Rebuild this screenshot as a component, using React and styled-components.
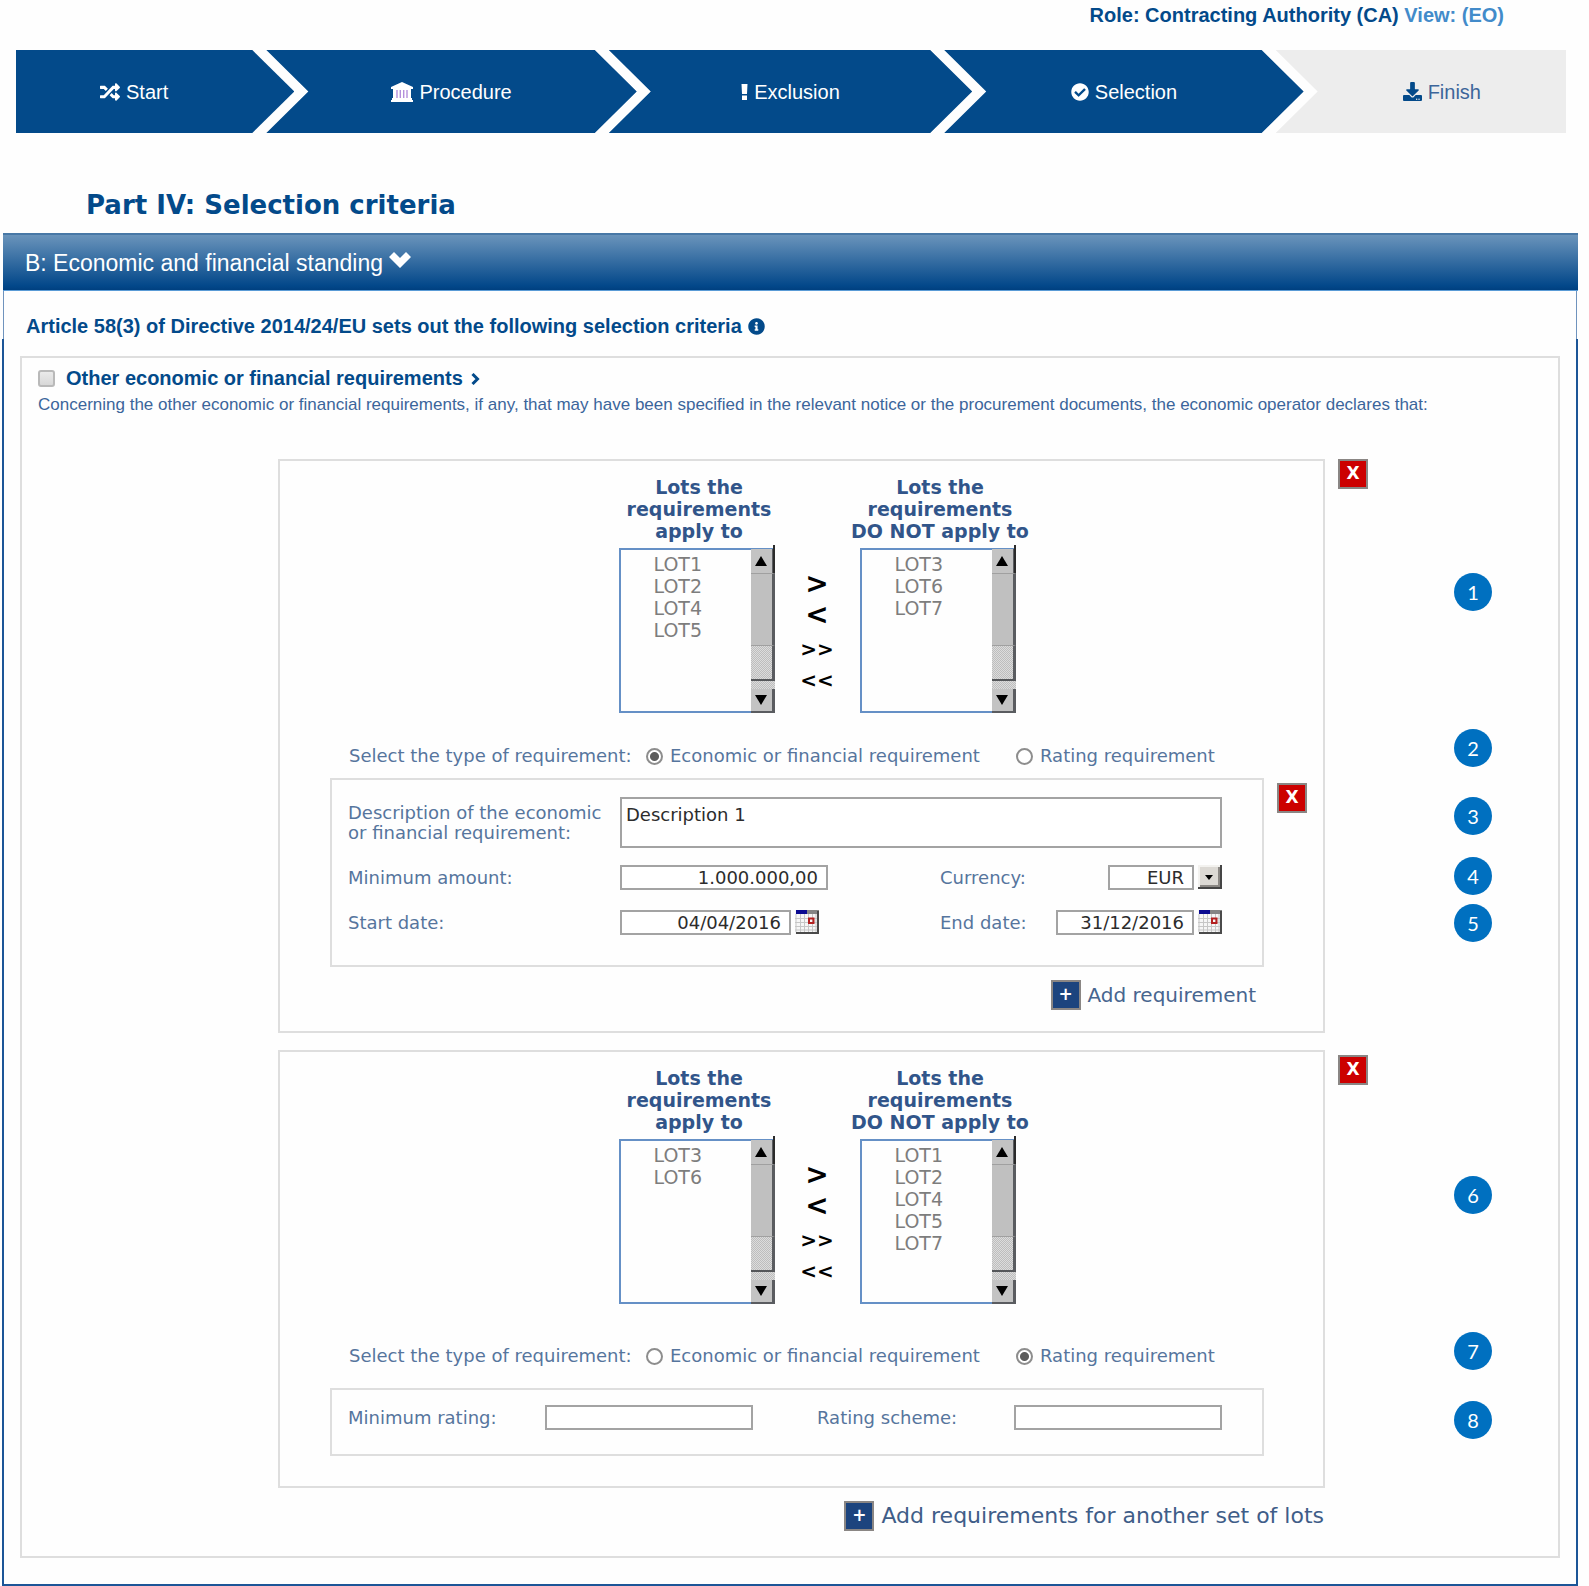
import React, { useState } from "react";
import styled, { createGlobalStyle, css } from "styled-components";
import { FaRandom, FaCheckCircle, FaDownload, FaInfoCircle } from "react-icons/fa";

const sans = `"Liberation Sans", Arial, sans-serif`;
const wide = `"DejaVu Sans", Verdana, sans-serif`;
const navy = "#034a8a";
const label = "#56759d";
const line = "#dedede";

const GlobalStyle = createGlobalStyle`
  * { box-sizing: border-box; }
  body { margin: 0; background: #fefefe; font-family: ${sans}; color: ${navy}; }
  button, input, select, textarea { font: inherit; color: inherit; margin: 0; }
`;

const Page = styled.main`
  padding: 0 11px 0 2px;
`;

const RoleLine = styled.div`
  height: 50px;
  padding: 4px 74px 0 0;
  text-align: right;
  font-size: 20px;
  line-height: 23px;
  font-weight: bold;
`;

const ViewLink = styled.a`
  color: #428bca;
  text-decoration: none;
`;

/* ---- wizard steps ---- */

const Steps = styled.nav`
  display: flex;
  height: 83px;
  margin: 0 12px 0 14px;
`;

const shapes = {
  first: css`
    clip-path: polygon(0 0, calc(100% - 42px) 0, 100% 50%, calc(100% - 42px) 100%, 0 100%);
    padding-right: 42px;
  `,
  middle: css`
    clip-path: polygon(0 0, calc(100% - 42px) 0, 100% 50%, calc(100% - 42px) 100%, 0 100%, 42px 50%);
  `,
  last: css`
    clip-path: polygon(0 0, 100% 0, 100% 100%, 0 100%, 42px 50%);
    padding-left: 42px;
  `,
};

const Step = styled.a`
  display: flex;
  align-items: center;
  justify-content: center;
  gap: 6px;
  flex: ${(p) => `${p.$share} ${p.$share} ${p.$share}px`};
  font-size: 20px;
  line-height: 24px;
  text-decoration: none;
  color: ${(p) => (p.$idle ? "#3c659a" : "#fff")};
  background: ${(p) => (p.$idle ? "#ededed" : navy)};
  & + & { margin-left: -28px; }
  svg { color: ${(p) => (p.$idle ? navy : "#fff")}; flex: none; }
  ${(p) => shapes[p.$shape]}
`;

/* ---- panel ---- */

const Title = styled.h1`
  margin: 57px 0 13px 84px;
  font: bold 26px/30px ${wide};
`;

const PanelHeader = styled.h2`
  display: flex;
  align-items: center;
  gap: 6px;
  height: 58px;
  margin: 0 0 0 1px;
  padding: 0 22px;
  border-top: 2px solid #4878a6;
  border-bottom: 1px solid #5a9bd6;
  background: linear-gradient(#6a94bb, #03488a 92%, #004080);
  color: #fff;
  font-size: 23px;
  line-height: 28px;
  font-weight: normal;
  svg { margin-bottom: 6px; }
`;

const PanelIntro = styled.div`
  display: flex;
  align-items: center;
  gap: 6px;
  height: 48px;
  margin: 0 1px;
  padding: 22px 22px 0;
  border: solid #6f93bd;
  border-width: 0 1px;
  font-size: 20px;
  line-height: 23px;
  font-weight: bold;
`;

const PanelBody = styled.section`
  padding: 17px 16px 26px;
  border: 2px solid #1c5597;
  border-top: 0;
`;

const Box = styled.div`
  border: 2px solid ${line};
  padding-bottom: 25px;
`;

const CriterionLabel = styled.label`
  display: flex;
  align-items: center;
  margin: 9px 16px 0;
  font-size: 20px;
  line-height: 23px;
  font-weight: bold;
  svg { margin-left: 8px; }
`;

const Checkbox = styled.input`
  appearance: none;
  width: 17px;
  height: 17px;
  margin-right: 11px;
  border: 2px solid #b9b9b9;
  border-radius: 3px;
  background: linear-gradient(#eaeaea, #d8d8d8);
  &:checked { background: ${navy}; }
`;

const Note = styled.p`
  margin: 5px 16px 44px;
  color: #3b659b;
  font-size: 17px;
  line-height: 20px;
`;

/* ---- requirement sets ---- */

const SetRow = styled.div`
  display: flex;
  align-items: flex-start;
  margin: 0 66px 17px 256px;
`;

const Card = styled.section`
  flex: 1;
  min-width: 0;
  border: 2px solid ${line};
  padding: 15px 0 ${(p) => p.$bottom}px;
`;

const SquareButton = styled.button`
  flex: none;
  width: 30px;
  height: 30px;
  padding: 0 0 2px;
  border: 2px solid #8a8684;
  background: ${(p) => (p.$danger ? "#cc0000" : "#1c447e")};
  color: #fff;
  font: bold 17px/22px ${wide};
  text-align: center;
`;

const DeleteSlot = styled.div`
  display: flex;
  padding: ${(p) => (p.$low ? 5 : 0)}px 0 0 13px;
`;

const Markers = styled.div`
  display: flex;
  flex-direction: column;
  margin-left: 86px;
`;

const Marker = styled.span`
  display: flex;
  align-items: center;
  justify-content: center;
  width: 38px;
  height: 38px;
  margin-top: ${(p) => p.$space}px;
  border-radius: 50%;
  background: #0070c0;
  color: #fff;
  font: 20px/24px Lato, sans-serif;
`;

/* ---- lot picker ---- */

const Picker = styled.div`
  display: flex;
  justify-content: center;
  padding-left: 31px;
`;

const LotColumn = styled.div`
  display: flex;
  flex-direction: column;
  align-items: center;
  width: 196px;
`;

const LotTitle = styled.label`
  padding-left: 5px;
  margin-bottom: 6px;
  text-align: center;
  white-space: pre-line;
  color: #31558a;
  font: bold 19px/22px ${wide};
`;

const ListFrame = styled.div`
  display: flex;
  width: 156px;
  height: 165px;
  border: 2px solid #6590c6;
  border-right: 0;
`;

const LotList = styled.select`
  appearance: none;
  flex: 1;
  min-width: 0;
  padding: 3px 0 0;
  border: 0;
  border-radius: 0;
  outline: 0;
  overflow: hidden;
  background: transparent;
  color: #7d7d7d;
  font: 19px/22px ${wide};
  option { height: 22px; min-height: 22px; padding: 0 0 0 33px; color: #7d7d7d; }
`;

const ScrollBar = styled.div`
  position: relative;
  display: flex;
  flex-direction: column;
  width: 24px;
  margin: -1px 0 -2px;
  background: repeating-conic-gradient(#bdbdbd 0 25%, #dcdcdc 0 50%) 0 0 / 2px 2px;
  &::after {
    content: "";
    position: absolute;
    right: 0;
    top: -4px;
    width: 2px;
    height: 28px;
    background: #2b2b2b;
  }
`;

const ScrollButton = styled.button`
  display: flex;
  align-items: center;
  justify-content: center;
  height: 24px;
  padding: 0;
  border: solid #5a5c60;
  border-width: 0 3px ${(p) => (p.$down ? 2 : 0)}px 0;
  background: #c3c3c3;
`;

const Thumb = styled.div`
  height: 73px;
  border: solid #a0a0a0;
  border-width: 1px 0;
  border-right: 3px solid #5a5c60;
  background: #c0c0c0;
`;

const Track = styled.div`
  flex: 1;
  margin-bottom: 8px;
  border-right: 3px solid #5a5c60;
  border-bottom: 2px solid #55575a;
`;

const MoveColumn = styled.div`
  display: flex;
  flex-direction: column;
  justify-content: flex-end;
  width: 45px;
  padding-bottom: 18px;
`;

const MoveButton = styled.button`
  height: 31px;
  padding: 0 0 ${(p) => (p.$all ? 0 : 5)}px;
  border: 0;
  background: none;
  color: #000;
  font: bold ${(p) => (p.$all ? 20 : 28)}px/26px ${wide};
  white-space: nowrap;
`;

/* ---- requirement form ---- */

const TypeRow = styled.fieldset`
  display: flex;
  align-items: center;
  height: 24px;
  margin: ${(p) => (p.$roomy ? "40px 0 20px 69px" : "31px 0 10px 69px")};
  padding: 0;
  border: 0;
  color: ${label};
  font: 18px/24px ${wide};
`;

const TypePrompt = styled.span`
  width: 297px;
`;

const TypeOption = styled.label`
  display: flex;
  align-items: center;
  gap: 7px;
  width: ${(p) => p.$width};
`;

const Radio = styled.input`
  appearance: none;
  width: 17px;
  height: 17px;
  border: 2px solid #8d8d8d;
  border-radius: 50%;
  background: #fff;
  &:checked { background: radial-gradient(circle, #5c5c5c 0 4px, #fff 5px); }
`;

const DetailRow = styled.div`
  display: flex;
  align-items: flex-start;
  padding: 0 ${(p) => (p.$removable ? 16 : 59)}px 0 50px;
`;

const detailLayouts = {
  economic: css`
    grid-template-columns: 272px 1fr 282px;
    gap: 17px 0;
    padding: 17px 40px 27px 16px;
  `,
  rating: css`
    grid-template-columns: 197px 208px 1fr 197px 208px;
    padding: 15px 40px 24px 16px;
  `,
};

const Details = styled.div`
  display: grid;
  flex: 1;
  border: 2px solid ${line};
  color: ${label};
  font: 18px/25px ${wide};
  ${(p) => detailLayouts[p.$kind]}
`;

const LongLabel = styled.label`
  align-self: center;
  line-height: 20px;
`;

const Field = styled.input`
  width: ${(p) => p.$width}px;
  height: 25px;
  padding: 0 8px;
  border: 2px solid #a3a3a3;
  background: #fff;
  color: #2c2c2c;
  text-align: right;
`;

const TextArea = styled.textarea`
  display: block;
  grid-column: span 2;
  height: 51px;
  padding: 5px 4px;
  border: 2px solid #a3a3a3;
  background: #fff;
  color: #2c2c2c;
  line-height: 22px;
  resize: none;
`;

const Control = styled.div`
  display: flex;
  gap: 4px;
  height: 28px;
`;

const LabelledControl = styled(Control)`
  label { flex: 1; }
`;

const Currency = styled.select`
  appearance: none;
  width: 86px;
  height: 25px;
  padding: 0 8px;
  border: 2px solid #a3a3a3;
  border-radius: 0;
  background: #fff;
  color: #2c2c2c;
  line-height: 21px;
  text-align-last: right;
`;

const IconButton = styled.button`
  display: block;
  width: 24px;
  height: 24px;
  padding: 0;
  border: 0;
  background: none;
  svg { display: block; }
`;

const AddRow = styled.div`
  display: flex;
  align-items: center;
  justify-content: flex-end;
  gap: 7px;
  margin: 13px 67px 0 0;
  color: #47658f;
  font: 20px/30px ${wide};
`;

const AddSetRow = styled(AddRow)`
  margin: -4px 234px 0 0;
  color: #3f5d88;
  font-size: 22px;
`;

/* ---- drawings ---- */

const Bank = () => (
  <svg width="22" height="20" viewBox="0 0 22 20">
    <path fill="#fff" d="M11 0 22 5v2H0V5zM2 7h18v9H2zM1 16h20v2H1zM0 18h22v2H0z" />
    <path stroke="#b48fdc" strokeWidth="1.4" d="M6 8v8M9.3 8v8M12.7 8v8M16 8v8" />
  </svg>
);

const Exclamation = () => (
  <svg width="7" height="16" viewBox="0 0 7 16">
    <path fill="#fff" d="M.5 0h6L6 10H1zM1 11.500h5V16H1z" />
  </svg>
);

const ChevronDown = () => (
  <svg width="22" height="16" viewBox="0 0 22 16">
    <path fill="#fff" d="M0 5 5 0l6 6 6-6 5 5-11 11z" />
  </svg>
);

const ChevronRight = () => (
  <svg width="9" height="12" viewBox="0 0 9 12">
    <path fill="none" stroke={navy} strokeWidth="3" d="M1.5 1 6.5 6l-5 5" />
  </svg>
);

const Triangle = ({ down }) => (
  <svg width="12" height="10" viewBox="0 0 12 10">
    <path d={down ? "M0 0h12L6 10z" : "M0 10h12L6 0z"} />
  </svg>
);

const Calendar = () => (
  <svg width="24" height="24" viewBox="0 0 24 24">
    <path fill="#f6f6f6" d="M0 0h24v24H0z" />
    <path stroke="#c6c6c6" strokeWidth="1" d="M1 4v18M5.500 4v18M9.500 4v18M13.500 4v18M17.500 4v18M21 4v18M0 8.500h22M0 12.500h22M0 16.500h22M0 20h22" />
    <path fill="#0a0a90" d="M1 0h11v4H1z" />
    <path fill="#858585" d="M12 0h12v4H12z" />
    <path fill="none" stroke="#b32020" strokeWidth="2" d="M14 8.500h4.500v4.500H14z" />
    <path fill="none" stroke="#4a4a4a" strokeWidth="2" d="M23 1v22H1" />
  </svg>
);

const DropArrow = () => (
  <svg width="24" height="24" viewBox="0 0 24 24">
    <path fill="#dcd9d4" d="M0 0h24v24H0z" />
    <path fill="none" stroke="#f3f2ef" strokeWidth="2" d="M1 22V1h21" />
    <path fill="none" stroke="#8b8884" strokeWidth="2" d="M21 2v19H2" />
    <path fill="none" stroke="#454545" strokeWidth="2" d="M23 0v23H0" />
    <path d="M7 10h8l-4 5z" />
  </svg>
);

/* ---- composition ---- */

function LotBox({ id, title, lots }) {
  return (
    <LotColumn>
      <LotTitle htmlFor={id}>{title}</LotTitle>
      <ListFrame>
        <LotList id={id} multiple>
          {lots.map((n) => (
            <option key={n}>{`LOT${n}`}</option>
          ))}
        </LotList>
        <ScrollBar>
          <ScrollButton type="button" aria-label="Scroll up"><Triangle /></ScrollButton>
          <Thumb />
          <Track />
          <ScrollButton type="button" $down aria-label="Scroll down"><Triangle down /></ScrollButton>
        </ScrollBar>
      </ListFrame>
    </LotColumn>
  );
}

function LotPicker({ id, applied, excluded }) {
  return (
    <Picker>
      <LotBox id={`${id}-in`} title={"Lots the\nrequirements\napply to"} lots={applied} />
      <MoveColumn>
        <MoveButton type="button">&gt;</MoveButton>
        <MoveButton type="button">&lt;</MoveButton>
        <MoveButton type="button" $all>&gt;&gt;</MoveButton>
        <MoveButton type="button" $all>&lt;&lt;</MoveButton>
      </MoveColumn>
      <LotBox id={`${id}-out`} title={"Lots the\nrequirements\nDO NOT apply to"} lots={excluded} />
    </Picker>
  );
}

function TypeChoice({ id, initial, roomy }) {
  const [kind, setKind] = useState(initial);
  return (
    <TypeRow $roomy={roomy}>
      <TypePrompt>Select the type of requirement:</TypePrompt>
      <TypeOption $width="370px">
        <Radio type="radio" name={id} checked={kind === "economic"} onChange={() => setKind("economic")} />
        Economic or financial requirement
      </TypeOption>
      <TypeOption $width="auto">
        <Radio type="radio" name={id} checked={kind === "rating"} onChange={() => setKind("rating")} />
        Rating requirement
      </TypeOption>
    </TypeRow>
  );
}

function MarkerRail({ items }) {
  return (
    <Markers>
      {items.map(([n, space]) => (
        <Marker key={n} $space={space}>{n}</Marker>
      ))}
    </Markers>
  );
}

export default function App() {
  return (
    <>
      <GlobalStyle />
      <Page>
        <RoleLine>
          Role: Contracting Authority (CA) <ViewLink href="#eo">View: (EO)</ViewLink>
        </RoleLine>
        <Steps>
          <Step href="#start" $share={278} $shape="first"><FaRandom size={20} />Start</Step>
          <Step href="#procedure" $share={370} $shape="middle"><Bank />Procedure</Step>
          <Step href="#exclusion" $share={363} $shape="middle"><Exclamation />Exclusion</Step>
          <Step href="#selection" $share={359} $shape="middle"><FaCheckCircle size={18} />Selection</Step>
          <Step href="#finish" $share={290} $shape="last" $idle><FaDownload size={19} />Finish</Step>
        </Steps>

        <Title>Part IV: Selection criteria</Title>
        <PanelHeader>B: Economic and financial standing <ChevronDown /></PanelHeader>
        <PanelIntro>
          Article 58(3) of Directive 2014/24/EU sets out the following selection criteria
          <FaInfoCircle size={17} />
        </PanelIntro>
        <PanelBody>
          <Box>
            <CriterionLabel>
              <Checkbox type="checkbox" />
              Other economic or financial requirements
              <ChevronRight />
            </CriterionLabel>
            <Note>
              Concerning the other economic or financial requirements, if any, that may have been specified in the
              relevant notice or the procurement documents, the economic operator declares that:
            </Note>

            <SetRow>
              <Card $bottom={21}>
                <LotPicker id="set1" applied={[1, 2, 4, 5]} excluded={[3, 6, 7]} />
                <TypeChoice id="type1" initial="economic" />
                <DetailRow $removable>
                  <Details $kind="economic">
                    <LongLabel htmlFor="desc">
                      Description of the economic<br />or financial requirement:
                    </LongLabel>
                    <TextArea id="desc" defaultValue="Description 1" />
                    <label htmlFor="amount">Minimum amount:</label>
                    <Control><Field id="amount" $width={208} defaultValue="1.000.000,00" /></Control>
                    <LabelledControl>
                      <label htmlFor="currency">Currency:</label>
                      <Currency id="currency"><option>EUR</option></Currency>
                      <IconButton type="button" aria-label="Open currencies"><DropArrow /></IconButton>
                    </LabelledControl>
                    <label htmlFor="start">Start date:</label>
                    <Control>
                      <Field id="start" $width={171} defaultValue="04/04/2016" />
                      <IconButton type="button" aria-label="Pick start date"><Calendar /></IconButton>
                    </Control>
                    <LabelledControl>
                      <label htmlFor="end">End date:</label>
                      <Field id="end" $width={138} defaultValue="31/12/2016" />
                      <IconButton type="button" aria-label="Pick end date"><Calendar /></IconButton>
                    </LabelledControl>
                  </Details>
                  <DeleteSlot $low><SquareButton type="button" $danger>X</SquareButton></DeleteSlot>
                </DetailRow>
                <AddRow>
                  <SquareButton type="button" aria-labelledby="add-one">+</SquareButton>
                  <span id="add-one">Add requirement</span>
                </AddRow>
              </Card>
              <DeleteSlot><SquareButton type="button" $danger>X</SquareButton></DeleteSlot>
              <MarkerRail items={[[1, 114], [2, 118], [3, 30], [4, 22], [5, 9]]} />
            </SetRow>

            <SetRow>
              <Card $bottom={30}>
                <LotPicker id="set2" applied={[3, 6]} excluded={[1, 2, 4, 5, 7]} />
                <TypeChoice id="type2" initial="rating" roomy />
                <DetailRow>
                  <Details $kind="rating">
                    <label htmlFor="min-rating">Minimum rating:</label>
                    <Field id="min-rating" $width={208} />
                    <span />
                    <label htmlFor="scheme">Rating scheme:</label>
                    <Field id="scheme" $width={208} />
                  </Details>
                </DetailRow>
              </Card>
              <DeleteSlot $low><SquareButton type="button" $danger>X</SquareButton></DeleteSlot>
              <MarkerRail items={[[6, 126], [7, 118], [8, 31]]} />
            </SetRow>

            <AddSetRow>
              <SquareButton type="button" aria-labelledby="add-set">+</SquareButton>
              <span id="add-set">Add requirements for another set of lots</span>
            </AddSetRow>
          </Box>
        </PanelBody>
      </Page>
    </>
  );
}
